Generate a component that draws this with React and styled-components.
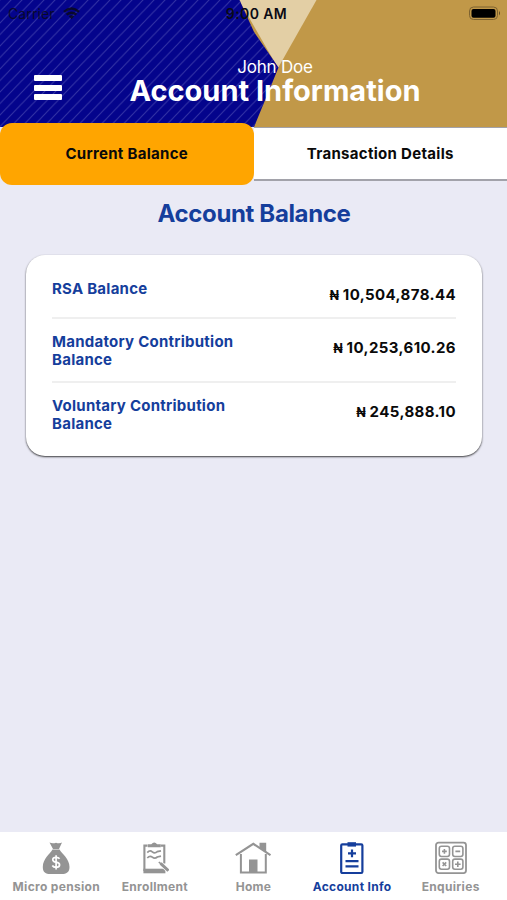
import React, { useState } from 'react';
import styled, { createGlobalStyle } from 'styled-components';

const GlobalStyle = createGlobalStyle`
    * {
        box-sizing: border-box;
    }

    body {
        margin: 0;
        font-family: Inter, "Liberation Sans", sans-serif;
    }
`;

const Screen = styled.div`
    display: flex;
    flex-direction: column;
    width: 507px;
    height: 900px;
    background: #eaeaf5;
    overflow: hidden;
`;

const Header = styled.header`
    position: relative;
    height: 127px;
    flex: none;
    color: #fff;
`;

const Backdrop = styled.svg`
    position: absolute;
    top: 0;
    left: 0;
`;

const StatusBar = styled.div`
    position: relative;
    display: grid;
    grid-template-columns: 1fr auto 1fr;
    align-items: center;
    height: 27px;
    padding: 0 6px 0 8px;
    color: #0a0a14;
`;

const Carrier = styled.div`
    display: flex;
    align-items: center;
    gap: 8px;
    font-size: 14px;
    letter-spacing: 0.1px;
    opacity: 0.8;
`;

const Clock = styled.div`
    padding-left: 4px;
    font-size: 14px;
    font-weight: 600;
    letter-spacing: 0.4px;
`;

const Battery = styled.svg`
    justify-self: end;
`;

const HeaderRow = styled.div`
    position: relative;
    display: grid;
    grid-template-columns: 98px 354px 1fr;
    height: 80px;
    margin-top: 29px;
`;

const MenuButton = styled.div`
    display: flex;
    flex-direction: column;
    gap: 3.7px;
    padding: 19px 0 0 34px;
    cursor: pointer;
`;

const MenuBar = styled.span`
    width: 28px;
    height: 6px;
    border-radius: 1px;
    background: #fff;
`;

const Titles = styled.div`
    display: flex;
    flex-direction: column;
    align-items: center;
    white-space: nowrap;
`;

const UserName = styled.p`
    margin: 0;
    font-size: 17px;
    line-height: 22px;
    letter-spacing: -0.2px;
`;

const Title = styled.h1`
    margin: 0;
    font-size: 29px;
    font-weight: 700;
    line-height: 26px;
`;

const Tabs = styled.div`
    position: relative;
    display: flex;
    flex: none;
    height: 54px;
`;

const Tab = styled.div`
    display: flex;
    justify-content: center;
    align-items: center;
    flex: 1;
    margin: ${props => props.$active ? '-4px 0' : '0'};
    padding-bottom: ${props => props.$active ? '1px' : '0'};
    border-radius: ${props => props.$active ? '12px' : '0'};
    border: solid #a2a2aa;
    border-width: ${props => props.$active ? '0' : '1px 0 2px'};
    background: ${props => props.$active ? '#ffa500' : '#fff'};
    color: #0a0a0a;
    font-size: 15px;
    font-weight: 700;
    letter-spacing: 0.3px;
    cursor: pointer;
`;

const Content = styled.main`
    display: flex;
    flex-direction: column;
    flex: 1;
    padding: 17px 25px 0 26px;
`;

const Heading = styled.h2`
    margin: 0 0 25px;
    color: #153e9c;
    font-size: 24px;
    font-weight: 700;
    line-height: 32px;
    letter-spacing: -0.35px;
    text-align: center;
`;

const Card = styled.div`
    height: 201px;
    padding: 0 26px;
    border-radius: 19px;
    background: #fff;
    box-shadow: 0 1px 2px rgba(0, 0, 0, 0.75);
`;

const BalanceRow = styled.div`
    display: flex;
    justify-content: space-between;
    height: ${props => props.$height}px;
    padding-top: ${props => props.$top}px;
    border-bottom: ${props => props.$last ? 'none' : '2px solid #efefef'};
    font-size: 15px;
    font-weight: 700;
    line-height: 18px;
`;

const Label = styled.div`
    width: 200px;
    color: #153e9c;
    letter-spacing: 0.25px;
`;

const Amount = styled.div`
    margin-top: 6px;
    color: #0a0a0a;
    letter-spacing: 0.4px;
    white-space: nowrap;
`;

const Naira = styled.span`
    font-size: 12.5px;
    letter-spacing: 0;
`;

const BottomNav = styled.nav`
    display: flex;
    flex: none;
    height: 68px;
    padding: 0 7px;
    background: #fff;
`;

const NavItem = styled.div`
    display: flex;
    flex-direction: column;
    align-items: center;
    gap: 4px;
    flex: 1;
    padding-top: 9px;
    color: ${props => props.$active ? '#153e9c' : '#949494'};
    font-size: 12px;
    font-weight: 700;
    line-height: 16px;
    letter-spacing: 0.32px;
    white-space: nowrap;
    cursor: pointer;
`;

const WifiIcon = () => (
    <svg width="17" height="13" viewBox="0 0 17 13" fill="none" stroke="currentColor" strokeWidth="2.4">
        <path d="M1 4.8 Q8.5 -1.6 16 4.8" />
        <path d="M3.6 7.7 Q8.5 3.6 13.4 7.7" />
        <path d="M5.8 9.3 Q8.5 7.3 11.2 9.3 L8.5 12.3 Z" fill="currentColor" stroke="none" />
    </svg>
);

const BatteryIcon = () => (
    <Battery width="33" height="15" viewBox="0 0 33 15">
        <rect x="1.5" y="1" width="28" height="12.5" rx="4" fill="none" stroke="#7d6230" strokeWidth="1" />
        <rect x="3.5" y="3" width="24" height="8.8" rx="2" fill="#000" />
        <path d="M31 5 Q33 7.2 31 9.5 Z" fill="#5f4a25" />
    </Battery>
);

const HeaderArt = () => (
    <Backdrop width="507" height="127" viewBox="0 0 507 127">
        <defs>
            <pattern id="stripes" width="11" height="11.5" patternUnits="userSpaceOnUse">
                <path d="M-1 12.55 L12 -1.05 M-5.5 5.75 L5.5 -5.75 M5.5 17.25 L16.5 5.75" stroke="#3232a4" strokeWidth="1.1" />
            </pattern>
        </defs>
        <rect width="507" height="127" fill="#c19848" />
        <path d="M239 0 H316.5 L278 68 Z" fill="#e3cfa5" />
        <path d="M0 0 H239.5 L254 32 L278.5 67.5 L254 127 H0 Z" fill="#04048c" />
        <path d="M0 0 H239.5 L254 32 L278.5 67.5 L254 127 H0 Z" fill="url(#stripes)" />
    </Backdrop>
);

const MoneyBagIcon = () => (
    <svg width="28" height="34" viewBox="0 0 28 34">
        <path d="M7.5 1.5 Q10.5 3 14 1.8 Q17.5 3 20 1.5 L17 8 H11 Z" fill="currentColor" />
        <path d="M10.5 8.6 H17.5 C20 13 27.5 18 27.5 26 C27.5 31.5 24 33 20 33 H8 C4 33 0.8 31.5 0.8 26 C0.8 18 8 13 10.5 8.6 Z" fill="currentColor" />
        <path d="M17.6 17.8 Q16.5 16.3 14 16.3 Q10.7 16.4 10.8 18.8 Q11 20.6 14 21.1 Q17.6 21.7 17.6 23.9 Q17.4 26.3 14.1 26.3 Q11.4 26.3 10.3 24.5 M14.1 14.2 V28.5" fill="none" stroke="#fff" strokeWidth="1.7" />
    </svg>
);

const ClipboardPenIcon = () => (
    <svg width="28" height="34" viewBox="0 0 28 34" fill="none" stroke="currentColor">
        <path d="M6.5 4.6 H3.4 V30 M20 4.6 H23.3 V22.5 M23.3 28 V30" strokeWidth="2.1" />
        <path d="M2.4 30 H24.4" strokeWidth="4.6" />
        <path d="M6.8 3.2 H10.3 Q13.2 -0.4 16.2 3.2 H19.8 V6.3 H6.8 Z" fill="currentColor" stroke="none" />
        <path d="M6.3 11.6 Q8.8 8.7 11.3 10.8 T16.3 10.6 L20 9.8 M6.3 17 Q8.8 14.1 11.3 16.2 T16.3 16 L20 15.2" strokeWidth="1.7" />
        <path d="M18.5 21.5 L28 30.5" stroke="#fff" strokeWidth="4" />
        <path d="M17.8 21 L20 22.8" strokeWidth="1.6" />
        <path d="M19.6 22.4 L27.4 29.8" strokeWidth="2.9" />
    </svg>
);

const HomeIcon = () => (
    <svg width="36" height="34" viewBox="0 0 36 34" fill="none" stroke="currentColor">
        <path d="M5.9 13 V31.4 H30.8 V13" strokeWidth="2" />
        <path d="M0.8 14.2 L18.3 2.8 L35.5 14.2" strokeWidth="2.2" />
        <path d="M24.5 1.8 H31.2 V11.5 L24.5 7 Z M14 18.5 H22.5 V32 H14 Z" fill="currentColor" stroke="none" />
    </svg>
);

const AccountIcon = () => (
    <svg width="26" height="34" viewBox="0 0 26 34" fill="none" stroke="currentColor">
        <rect x="2.2" y="3.4" width="21.2" height="28.6" rx="1.2" strokeWidth="2.2" />
        <path d="M8.5 1.2 H17 V5.6 H8.5 Z" fill="currentColor" stroke="none" />
        <path d="M9 12.3 H17 M13 8.4 V16.2" strokeWidth="2.2" />
        <path d="M6.5 20.2 H19.5 M6.5 25.4 H19.5" strokeWidth="2.3" />
    </svg>
);

const EnquiriesIcon = () => (
    <svg width="32" height="34" viewBox="0 0 32 34" fill="none" stroke="currentColor" strokeWidth="1.6">
        <rect x="1" y="1.6" width="30" height="30.5" rx="2.5" strokeWidth="1.8" />
        <rect x="4.3" y="5.3" width="10.2" height="10.2" rx="2.2" />
        <rect x="17.7" y="5.3" width="10.2" height="10.2" rx="2.2" />
        <rect x="4.3" y="18.1" width="10.2" height="10.2" rx="2.2" />
        <rect x="17.7" y="18.1" width="10.2" height="10.2" rx="2.2" />
        <path d="M7 10.4 H11.8 M9.4 8 V12.8 M20.4 10.4 H25.2 M7.6 21.4 L11.2 25 M11.2 21.4 L7.6 25 M20 23.2 H25.6 M22.8 20.4 V26" />
    </svg>
);

const balances = [
    { label: 'RSA Balance', amount: '10,504,878.44', height: 64, top: 24.5 },
    { label: 'Mandatory Contribution Balance', amount: '10,253,610.26', height: 64, top: 13.5 },
    { label: 'Voluntary Contribution Balance', amount: '245,888.10', height: 73, top: 13.5 }
];

const navItems = [
    { label: 'Micro pension', Icon: MoneyBagIcon },
    { label: 'Enrollment', Icon: ClipboardPenIcon },
    { label: 'Home', Icon: HomeIcon },
    { label: 'Account Info', Icon: AccountIcon },
    { label: 'Enquiries', Icon: EnquiriesIcon }
];

const App = () => {
    const [tab, setTab] = useState('Current Balance');
    const [page, setPage] = useState('Account Info');

    return (
        <>
            <GlobalStyle />
            <Screen>
                <Header>
                    <HeaderArt />
                    <StatusBar>
                        <Carrier>Carrier <WifiIcon /></Carrier>
                        <Clock>9:00 AM</Clock>
                        <BatteryIcon />
                    </StatusBar>
                    <HeaderRow>
                        <MenuButton>
                            <MenuBar />
                            <MenuBar />
                            <MenuBar />
                        </MenuButton>
                        <Titles>
                            <UserName>John Doe</UserName>
                            <Title>Account Information</Title>
                        </Titles>
                    </HeaderRow>
                </Header>
                <Tabs>
                    {['Current Balance', 'Transaction Details'].map(name =>
                        <Tab key={name} $active={tab === name} onClick={() => setTab(name)}>{name}</Tab>
                    )}
                </Tabs>
                <Content>
                    <Heading>Account Balance</Heading>
                    <Card>
                        {balances.map((row, i) =>
                            <BalanceRow key={row.label} $height={row.height} $top={row.top} $last={i === balances.length - 1}>
                                <Label>{row.label}</Label>
                                <Amount><Naira>₦</Naira> {row.amount}</Amount>
                            </BalanceRow>
                        )}
                    </Card>
                </Content>
                <BottomNav>
                    {navItems.map(({ label, Icon }) =>
                        <NavItem key={label} $active={page === label} onClick={() => setPage(label)}>
                            <Icon />
                            {label}
                        </NavItem>
                    )}
                </BottomNav>
            </Screen>
        </>
    );
}

export default App;
